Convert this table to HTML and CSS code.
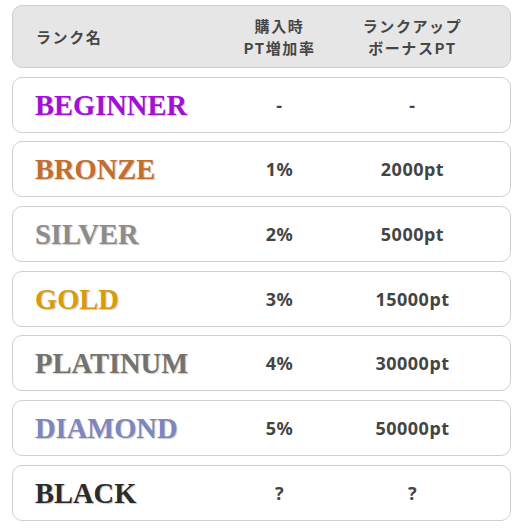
FILE: index.html
```html
<!DOCTYPE html>
<html lang="ja">
<head>
<meta charset="utf-8">
<link rel="stylesheet" href="styles.css">
</head>
<body>
<div class="table">
  <div class="head">
    <div class="hcell hname">ランク名</div>
    <div class="hcell">購入時<br>PT増加率</div>
    <div class="hcell">ランクアップ<br>ボーナスPT</div>
  </div>
  <div class="row"><div class="name beginner">BEGINNER</div><div class="val">-</div><div class="val">-</div></div>
  <div class="row"><div class="name bronze">BRONZE</div><div class="val">1%</div><div class="val">2000pt</div></div>
  <div class="row"><div class="name silver">SILVER</div><div class="val">2%</div><div class="val">5000pt</div></div>
  <div class="row"><div class="name gold">GOLD</div><div class="val">3%</div><div class="val">15000pt</div></div>
  <div class="row"><div class="name platinum">PLATINUM</div><div class="val">4%</div><div class="val">30000pt</div></div>
  <div class="row"><div class="name diamond">DIAMOND</div><div class="val">5%</div><div class="val">50000pt</div></div>
  <div class="row"><div class="name black">BLACK</div><div class="val">?</div><div class="val">?</div></div>
</div>
</body>
</html>
```
FILE: styles.css
```css
html, body { background: #fff; }
body {
  margin: 5px 7px 0 12px;
  font-family: "Noto Sans CJK JP", "Noto Sans", sans-serif;
  color: #444;
}
.table {
  display: flex;
  flex-direction: column;
  gap: 8.7px;
}
.head, .row {
  display: grid;
  grid-template-columns: 1fr 133px 133px;
  align-items: center;
  padding: 0 31px 0 22px;
  border: 1px solid #cfcfcf;
  border-radius: 10px;
}
.head {
  background: #e6e6e6;
  height: 61px;
}
.row {
  background: #fff;
  height: 54px;
}
.hcell {
  font-size: 15px;
  font-weight: 700;
  line-height: 22px;
  letter-spacing: 1.6px;
  text-align: center;
  color: #464646;
}
.hcell.hname { text-align: left; padding-left: 1px; }
.name {
  font-family: "Liberation Serif", serif;
  font-weight: 700;
  font-size: 28.5px;
  text-shadow: 1px 1px 1px rgba(0,0,0,0.22);
  padding-top: 2px;
}
.val {
  text-align: center;
  font-family: "Noto Sans", sans-serif;
  font-weight: 700;
  font-size: 18px;
  letter-spacing: 0.5px;
  color: #444;
}
.beginner { color: #a30fd6; }
.bronze { color: #c36e2c; }
.silver { color: #8c8c8c; }
.gold { color: #d89c0a; }
.platinum { color: #72726e; }
.diamond { color: #7c86c0; }
.black { color: #2b2b2b; }
```
